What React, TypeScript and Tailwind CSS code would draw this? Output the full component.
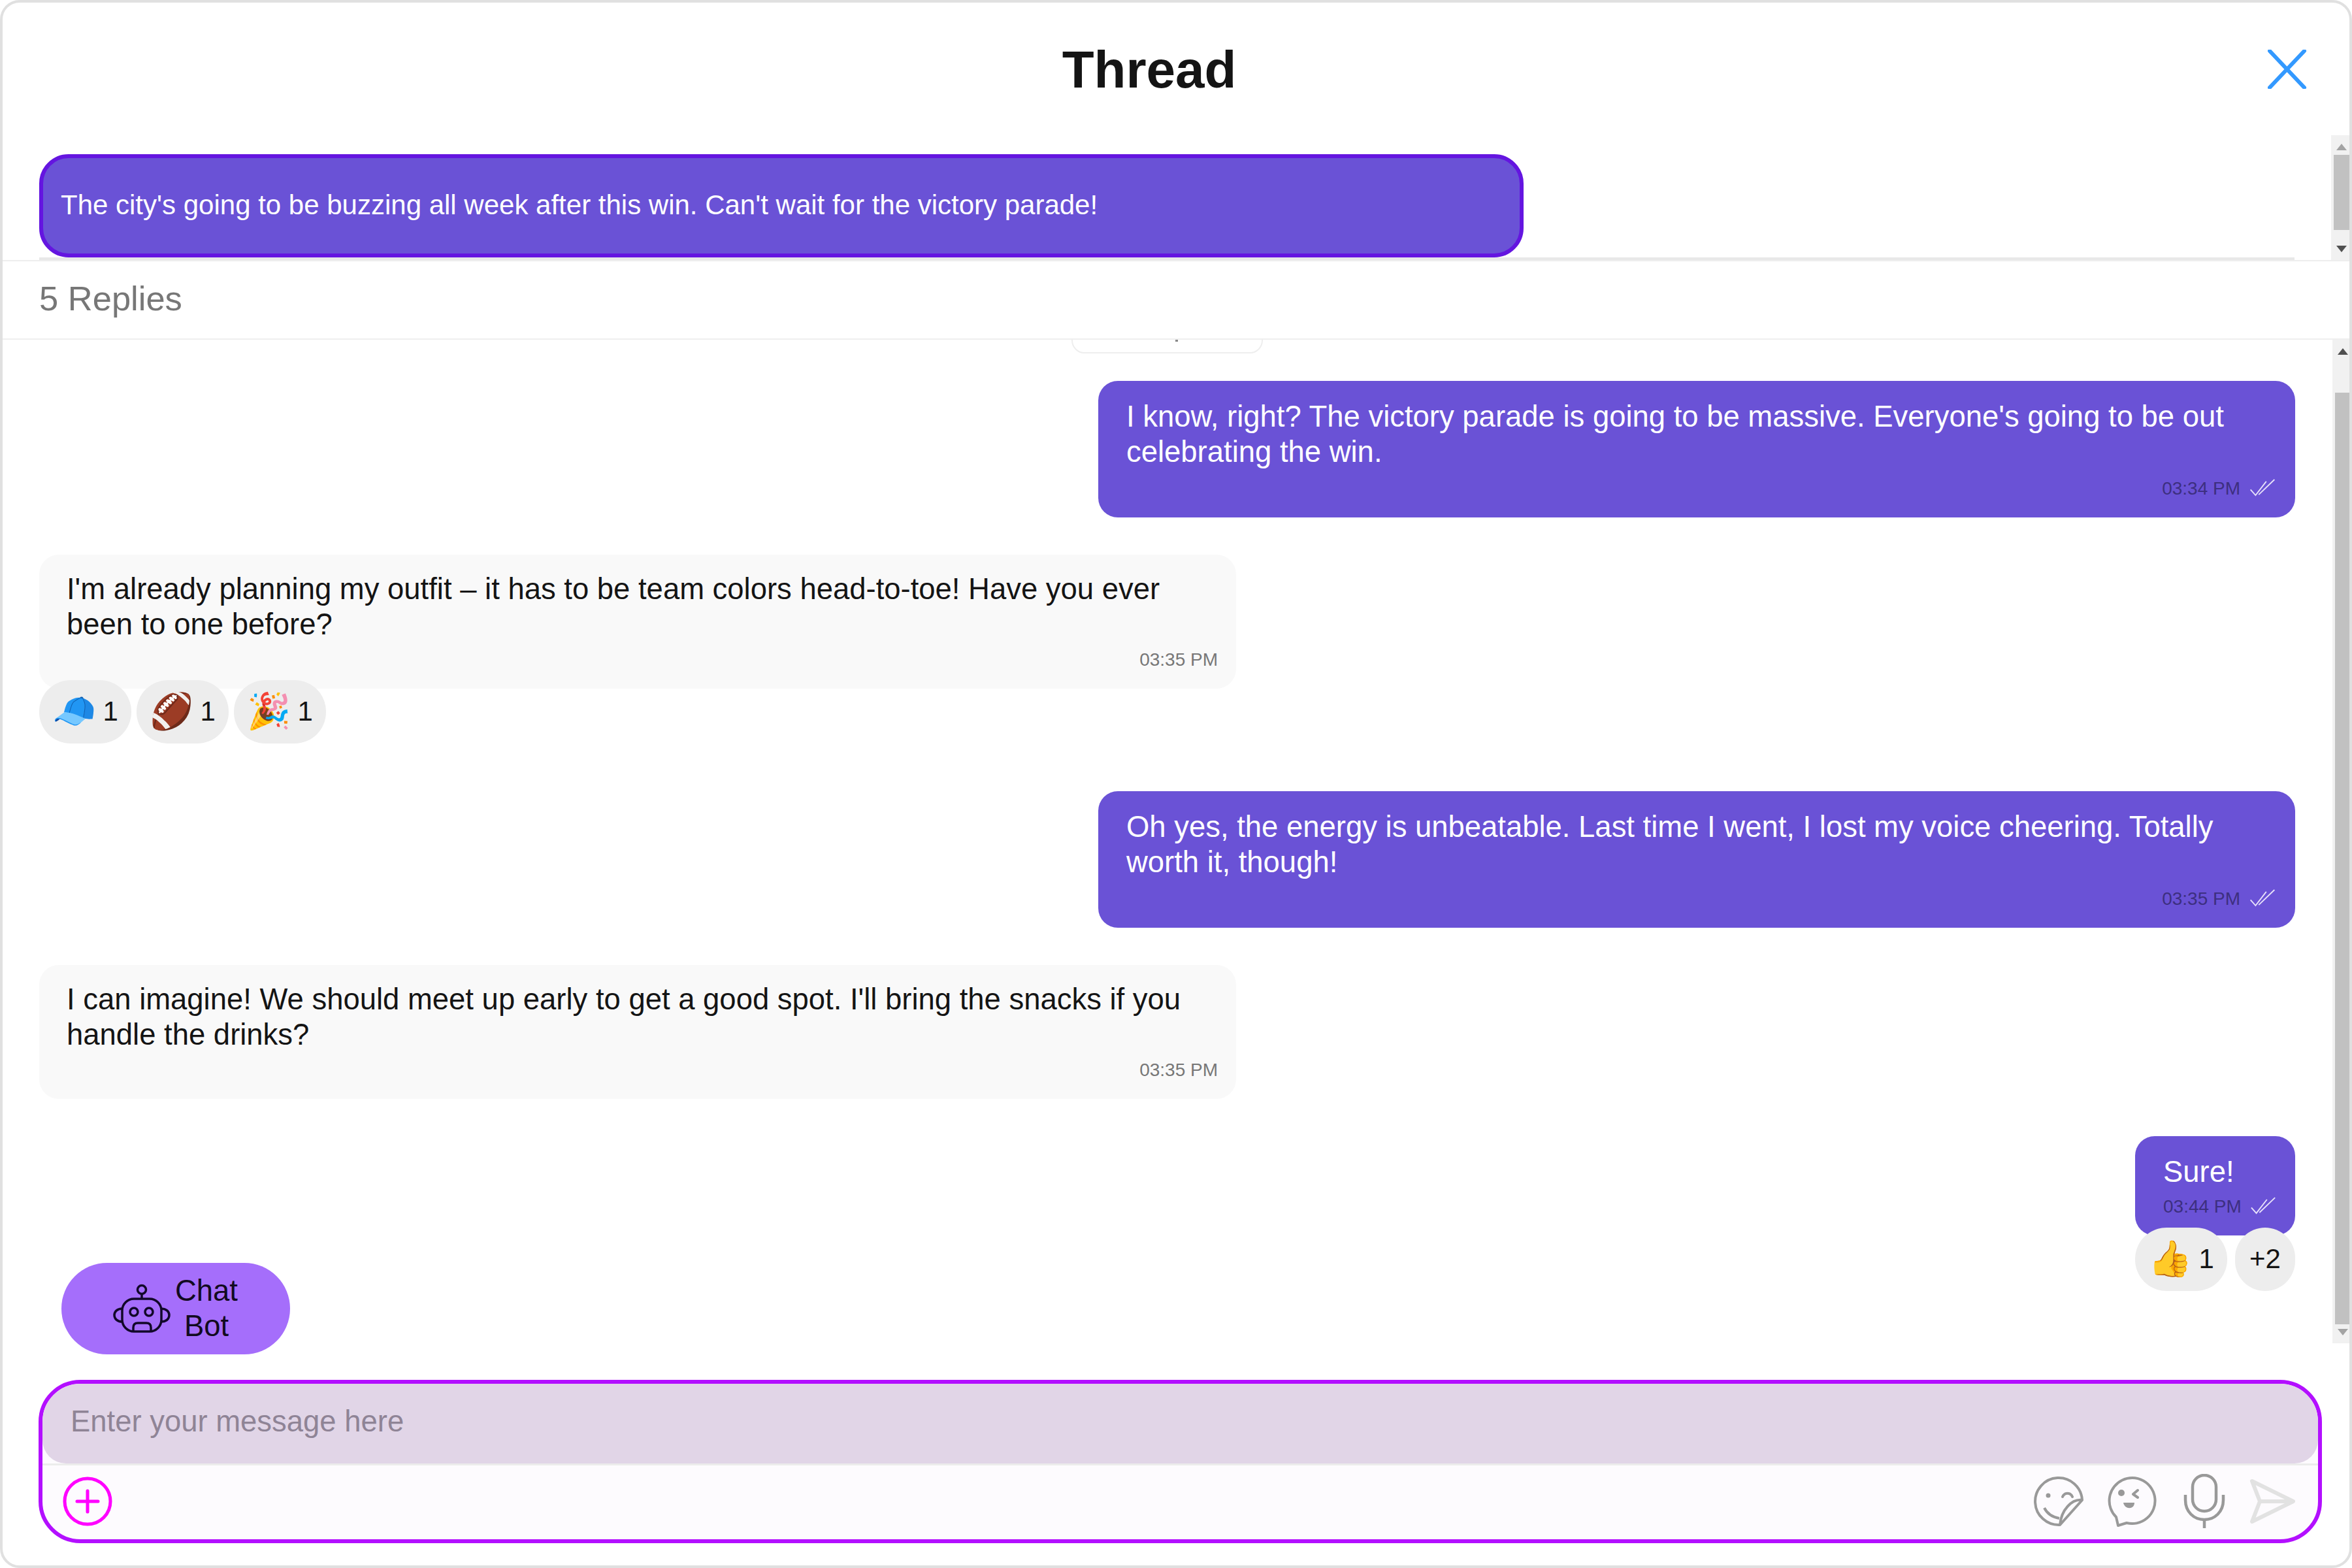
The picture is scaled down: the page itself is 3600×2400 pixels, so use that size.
import React from "react";

const font = "font-['Liberation_Sans',Arial,sans-serif]";

function Checks() {
  return (
    <svg viewBox="0 0 40 28" className="h-[27px] w-[40px] ml-[14px] mb-[4px]" fill="none" stroke="#e6e0fa" strokeWidth="2">
      <path d="M1 17 L9 26 L26 4" />
      <path d="M14 25 L39 1" />
    </svg>
  );
}

function Outgoing({ text, time, short = false }: { text: React.ReactNode; time: string; short?: boolean }) {
  return (
    <div className={`bg-[#6a52d6] rounded-[30px] pl-[43px] pr-[30px] pt-[28px] pb-[24px] text-white text-[45.45px] leading-[54px] ${short ? "w-[245px]" : "w-[1832px]"}`}>
      <div>{text}</div>
      <div className={`flex items-center justify-end h-[40px] text-[28px] text-[#3d2f80] ${short ? "mt-[6px]" : "mt-[9px]"}`}>
        <span className="whitespace-nowrap">{time}</span>
        <Checks />
      </div>
    </div>
  );
}

function Incoming({ text, time }: { text: React.ReactNode; time: string }) {
  return (
    <div className="bg-[#f9f9f9] rounded-[30px] pl-[42px] pr-[28px] pt-[26px] pb-[26px] w-[1832px] text-[#141414] text-[45.45px] leading-[54px]">
      <div>{text}</div>
      <div className="flex items-center justify-end h-[36px] mt-[9px] text-[28px] text-[#777777]">{time}</div>
    </div>
  );
}

function Reaction({ emoji, count }: { emoji: string; count: string }) {
  return (
    <div className="h-[97px] w-[141px] rounded-[48px] bg-[#ededed] flex items-center justify-center gap-[10px] pb-[2px] text-[42px] text-[#141414]">
      <span className="font-['Noto_Color_Emoji'] text-[54px] leading-none">{emoji}</span>
      <span>{count}</span>
    </div>
  );
}

function Scrollbar({ thumbTop, thumbH, w, dim, top }: { thumbTop: string; thumbH: string; w: string; dim: boolean; top: string }) {
  return (
    <div className={`absolute right-0 bottom-0 ${top} ${w} bg-[#f1f1f1]`}>
      <div className={`absolute left-[4px] right-0 bg-[#c1c1c1] ${thumbTop} ${thumbH}`} />
      <svg className="absolute left-[8px] top-[13px]" width="16" height="10" viewBox="0 0 16 10"><path d="M8 0 L16 10 L0 10 Z" fill={dim ? "#a3a3a3" : "#505050"} /></svg>
      <svg className="absolute left-[8px] bottom-[12px]" width="16" height="10" viewBox="0 0 16 10"><path d="M0 0 L16 0 L8 10 Z" fill={dim ? "#505050" : "#a3a3a3"} /></svg>
    </div>
  );
}

export default function App() {
  return (
    <div className={`w-[3600px] h-[2400px] bg-white ${font}`}>
      <div className="w-full h-full border-[4px] border-[#e0e0e0] rounded-[30px] flex flex-col overflow-hidden relative">
        <div className="h-[200px] shrink-0 relative flex justify-center pt-[58px] pr-[82px]">
          <h1 className="text-[80px] leading-[90px] font-bold text-[#141414]">Thread</h1>
          <svg className="absolute left-[3467px] top-[72px]" width="60" height="60" viewBox="0 0 60 60" fill="none" stroke="#3399ff" strokeWidth="6" strokeLinecap="round">
            <path d="M3 2 L56 58 M56 2 L3 58" />
          </svg>
        </div>
        <div className="h-[194px] shrink-0 relative pl-[56px] pt-[32px]">
          <div className="h-[158px] w-[2272px] bg-[#6a52d6] border-[6px] border-[#6415e0] rounded-[45px] flex items-center pl-[27px] pb-[4px] text-white text-[42px]">
            The city's going to be buzzing all week after this win. Can't wait for the victory parade!
          </div>
          <div className="h-[4px] bg-[#e8e8e8] w-[3452px]" />
          <Scrollbar top="top-[3px]" thumbTop="top-[30px]" thumbH="h-[115px]" w="w-[28px]" dim />
        </div>
        <div className="h-[122px] shrink-0 border-y-[2px] border-[#eeeeee] flex items-center pl-[56px] pb-[3px] text-[52.5px] text-[#777777]">5 Replies</div>
        <div className="h-[1536px] shrink-0 relative overflow-hidden">
          <div className="flex flex-col pl-[56px] pr-[83px]">
            <div className="mt-[-39px] self-center w-[293px] h-[60px] border-[2px] border-[#eeeeee] rounded-[20px] shrink-0 relative">
              <div className="absolute left-[157px] top-[37px] w-[4px] h-[3px] bg-[#8a8a8a]" />
            </div>
            <div className="mt-[42px] self-end">
              <Outgoing time="03:34 PM" text="I know, right? The victory parade is going to be massive. Everyone's going to be out celebrating the win." />
            </div>
            <div className="mt-[57px]">
              <Incoming time="03:35 PM" text="I'm already planning my outfit – it has to be team colors head-to-toe! Have you ever been to one before?" />
              <div className="flex gap-[8px] mt-[-13px] relative">
                <Reaction emoji="🧢" count="1" />
                <Reaction emoji="🏈" count="1" />
                <Reaction emoji="🎉" count="1" />
              </div>
            </div>
            <div className="mt-[73px] self-end">
              <Outgoing time="03:35 PM" text="Oh yes, the energy is unbeatable. Last time I went, I lost my voice cheering. Totally worth it, though!" />
            </div>
            <div className="mt-[57px]">
              <Incoming time="03:35 PM" text="I can imagine! We should meet up early to get a good spot. I'll bring the snacks if you handle the drinks?" />
            </div>
            <div className="mt-[57px] self-end">
              <Outgoing short time="03:44 PM" text="Sure!" />
              <div className="flex gap-[12px] mt-[-12px] relative">
                <Reaction emoji="👍" count="1" />
                <div className="h-[97px] w-[92px] rounded-[48px] bg-[#ededed] flex items-center justify-center pb-[2px] text-[42px] text-[#141414]">+2</div>
              </div>
            </div>
          </div>
          <Scrollbar top="top-0" thumbTop="top-[81px]" thumbH="h-[1426px]" w="w-[26px]" dim={false} />
        </div>
        <div className="h-[56px] shrink-0" />
        <div className="ml-[55px] w-[3495px] h-[250px] shrink-0 border-[6px] border-[#b30fff] rounded-[64px] overflow-hidden flex flex-col bg-[#fdfbfe]">
          <div className="h-[122px] shrink-0 bg-[#e1d5e7] rounded-t-[56px] rounded-b-[36px] flex items-center pl-[43px] pb-[6px] text-[45.45px] text-[#8f8496]">Enter your message here</div>
          <div className="h-[3px] bg-[#ececec] shrink-0" />
          <div className="flex-1 flex items-center pl-[31px] pr-[34px] pb-[3px]">
            <svg width="76" height="76" viewBox="0 0 76 76" fill="none" stroke="#ff00ff" strokeWidth="5">
              <circle cx="38" cy="38" r="35" />
              <path d="M22 38 H54 M38 22 V54" strokeLinecap="round" />
            </svg>
            <div className="flex-1" />
            <svg width="78" height="78" viewBox="0 0 78 78" fill="none" stroke="#999999" strokeWidth="4" strokeLinejoin="round" className="mr-[36px]">
              <path d="M76 37 A36 36 0 1 0 42 75 Z" />
              <path d="M76 37 C60 35 44 52 42 75" />
              <path d="M18 49 C22 57 30 63 41 65" />
              <circle cx="24" cy="30" r="3.5" fill="#999999" stroke="none" />
              <path d="M46 32 C49 25 58 25 61 32" strokeLinecap="round" />
            </svg>
            <svg width="76" height="80" viewBox="0 0 76 80" fill="none" stroke="#999999" strokeWidth="4" strokeLinejoin="round" className="mr-[41px]">
              <path d="M30 73 A35 35 0 1 0 14 64 L17 77 Z" />
              <circle cx="22" cy="27" r="5" fill="#999999" stroke="none" />
              <path d="M47 23 L40 29 L47 34" strokeLinecap="round" />
              <path d="M25 42 H42 C42 53 27 53 25 42 Z" fill="#999999" stroke="none" />
            </svg>
            <svg width="64" height="84" viewBox="0 0 64 84" fill="none" stroke="#999999" strokeWidth="4.5" className="mr-[36px]">
              <rect x="14" y="2" width="36" height="55" rx="18" />
              <path d="M3 32 V40 C3 58 16 70 32 70 C48 70 61 58 61 40 V32" />
              <path d="M32 70 V83" />
            </svg>
            <svg width="72" height="72" viewBox="0 0 72 72" fill="none" stroke="#e2e2e2" strokeWidth="6" strokeLinejoin="round">
              <path d="M5 5 L68 36 L5 67 L17 36 Z M17 36 H68" />
            </svg>
          </div>
        </div>
        <div className="absolute left-[90px] top-[1929px] w-[350px] h-[140px] rounded-[70px] bg-[#a56efb] flex items-center justify-center gap-[5px] pr-[3px] text-[45.45px] leading-[54px] text-[#120a20]">
          <svg className="w-[92px] h-[78px]" viewBox="0 0 92 78" fill="none" stroke="#12082a" strokeWidth="3.5">
            <circle cx="46" cy="10" r="6.5" />
            <path d="M46 16.5 V24" />
            <rect x="16" y="24" width="60" height="50" rx="18" />
            <path d="M16 39 C0 39 0 59 16 59 M76 39 C92 39 92 59 76 59" />
            <circle cx="34" cy="44" r="6" />
            <circle cx="57" cy="44" r="6" />
            <path d="M33 74 V68 C33 63 36 61 40 61 H53 C57 61 60 63 60 68 V74" />
          </svg>
          <div className="text-center">Chat<br />Bot</div>
        </div>
      </div>
    </div>
  );
}
